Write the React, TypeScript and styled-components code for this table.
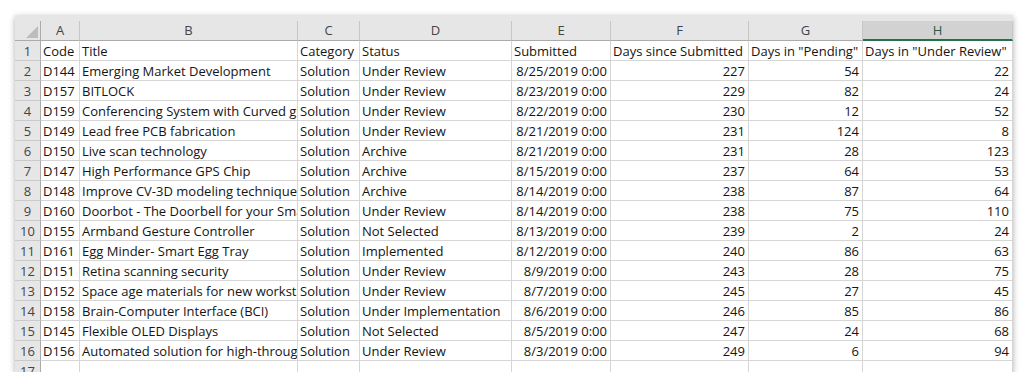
import styled, { createGlobalStyle } from "styled-components";

const GlobalStyle = createGlobalStyle`
  html, body {
    margin: 0;
    padding: 0;
    background: #ffffff;
  }
  body {
    font-family: "Open Sans", "Liberation Sans", sans-serif;
  }
`;

const COLUMNS = ["A", "B", "C", "D", "E", "F", "G", "H"];
const SELECTED = "H";

type Row = [string, string, string, string, string, number, number, number];

const HEADERS = [
  "Code",
  "Title",
  "Category",
  "Status",
  "Submitted",
  "Days since Submitted",
  'Days in "Pending"',
  'Days in "Under Review"',
];

const ROWS: Row[] = [
  ["D144", "Emerging Market Development", "Solution", "Under Review", "8/25/2019 0:00", 227, 54, 22],
  ["D157", "BITLOCK", "Solution", "Under Review", "8/23/2019 0:00", 229, 82, 24],
  ["D159", "Conferencing System with Curved glass", "Solution", "Under Review", "8/22/2019 0:00", 230, 12, 52],
  ["D149", "Lead free PCB fabrication", "Solution", "Under Review", "8/21/2019 0:00", 231, 124, 8],
  ["D150", "Live scan technology", "Solution", "Archive", "8/21/2019 0:00", 231, 28, 123],
  ["D147", "High Performance GPS Chip", "Solution", "Archive", "8/15/2019 0:00", 237, 64, 53],
  ["D148", "Improve CV-3D modeling techniques", "Solution", "Archive", "8/14/2019 0:00", 238, 87, 64],
  ["D160", "Doorbot - The Doorbell for your Smartphone", "Solution", "Under Review", "8/14/2019 0:00", 238, 75, 110],
  ["D155", "Armband Gesture Controller", "Solution", "Not Selected", "8/13/2019 0:00", 239, 2, 24],
  ["D161", "Egg Minder- Smart Egg Tray", "Solution", "Implemented", "8/12/2019 0:00", 240, 86, 63],
  ["D151", "Retina scanning security", "Solution", "Under Review", "8/9/2019 0:00", 243, 28, 75],
  ["D152", "Space age materials for new workstations", "Solution", "Under Review", "8/7/2019 0:00", 245, 27, 45],
  ["D158", "Brain-Computer Interface (BCI)", "Solution", "Under Implementation", "8/6/2019 0:00", 246, 85, 86],
  ["D145", "Flexible OLED Displays", "Solution", "Not Selected", "8/5/2019 0:00", 247, 24, 68],
  ["D156", "Automated solution for high-throughput screening", "Solution", "Under Review", "8/3/2019 0:00", 249, 6, 94],
];

const Page = styled.div`
  padding: 15px 15px 0 15px;
`;

const Sheet = styled.div`
  width: 998px;
  height: 357px;
  overflow: hidden;
  background: #ffffff;
  box-shadow: 0 2px 6px rgba(0, 0, 0, 0.32);
  display: grid;
  grid-template-columns: 26px 39px 218px 62px 152px 99px 138px 114px 150px;
  grid-auto-rows: 20px;
  grid-template-rows: 6px 20px;
  font-size: 13px;
  color: #151515;
`;

const TopStrip = styled.div`
  grid-column: 1 / -1;
  background: #e6e6e6;
`;

const Corner = styled.div`
  background: #e6e6e6;
  border-right: 1px solid #ababab;
  border-bottom: 1px solid #ababab;
  display: flex;
  align-items: flex-end;
  justify-content: flex-end;
  padding: 0 2px 2px 0;

  svg {
    display: block;
  }
`;

const ColHeader = styled.div<{ $selected?: boolean }>`
  background: ${(p) => (p.$selected ? "#d2d2d2" : "#e6e6e6")};
  border-right: 1px solid #c6c6c6;
  border-bottom: ${(p) => (p.$selected ? "2px solid #217346" : "1px solid #ababab")};
  color: ${(p) => (p.$selected ? "#2a5a40" : "#444444")};
  display: flex;
  align-items: center;
  justify-content: center;
  line-height: 19px;
`;

const RowHeader = styled.div`
  background: #e6e6e6;
  border-right: 1px solid #ababab;
  border-bottom: 1px solid #cacaca;
  color: #444444;
  text-align: center;
  padding-top: 1px;
  line-height: 19px;
`;

const Cell = styled.div<{ $align?: "left" | "right" }>`
  border-right: 1px solid #d6d6d6;
  border-bottom: 1px solid #d6d6d6;
  padding: 1px 3px 0 2px;
  line-height: 19px;
  white-space: nowrap;
  overflow: hidden;
  text-align: ${(p) => p.$align ?? "left"};
`;

const CornerTriangle = () => (
  <svg width="12" height="12" viewBox="0 0 12 12">
    <polygon points="12,0 12,12 0,12" fill="#bdbdbd" />
  </svg>
);

const DataRow = ({ n, cells }: { n: number; cells: (string | number)[] }) => (
  <>
    <RowHeader>{n}</RowHeader>
    {cells.map((c, i) => (
      <Cell key={i} $align={typeof c === "number" || (i === 4 && n > 1) ? "right" : "left"}>
        {c}
      </Cell>
    ))}
  </>
);

const App = () => {
  return (
    <>
      <GlobalStyle />
      <Page>
        <Sheet>
          <TopStrip />
          <Corner>
            <CornerTriangle />
          </Corner>
          {COLUMNS.map((c) => (
            <ColHeader key={c} $selected={c === SELECTED}>
              {c}
            </ColHeader>
          ))}
          <DataRow n={1} cells={HEADERS} />
          {ROWS.map((r, i) => (
            <DataRow key={i} n={i + 2} cells={r} />
          ))}
          <DataRow n={17} cells={["", "", "", "", "", "", "", ""]} />
        </Sheet>
      </Page>
    </>
  );
};

export default App;
